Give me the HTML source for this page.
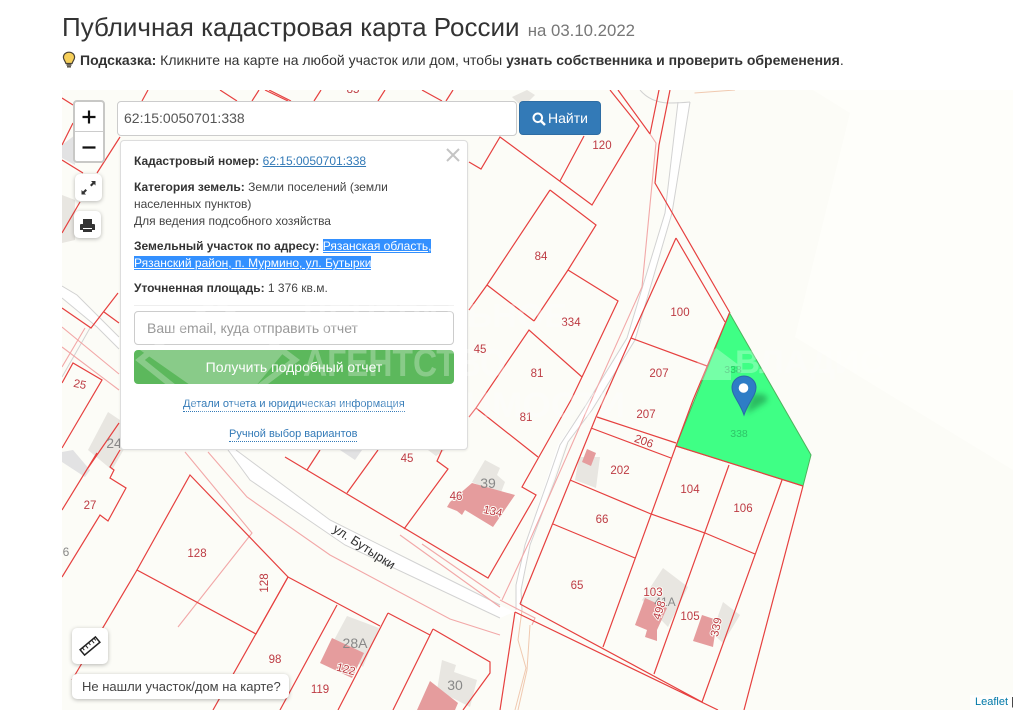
<!DOCTYPE html>
<html lang="ru"><head><meta charset="utf-8"><title>Публичная кадастровая карта России</title>
<style>
html,body{margin:0;padding:0;background:#fff}
body{width:1013px;height:720px;position:relative;overflow:hidden;font-family:"Liberation Sans",Arial,sans-serif;color:#333}
.a{position:absolute;white-space:nowrap}
h1{position:absolute;margin:0;left:62px;top:12px;font-size:26px;line-height:30px;font-weight:400;color:#333;white-space:nowrap}
h1 small{font-size:16.8px;color:#777;margin-left:1px}
.hint{left:80px;top:51px;font-size:14px;line-height:18px}
#map{position:absolute;left:62px;top:90px;width:951px;height:620px;overflow:hidden;background:#fcfcf7}
svg{position:absolute;left:0;top:0}
.r{fill:none;stroke:#e6403f;stroke-width:1.2}
.l{fill:none;stroke:#f2a8a8;stroke-width:1.1}
.g{fill:none;stroke:#d2d2d2;stroke-width:1}
.t text{font-family:"Liberation Sans",sans-serif;font-size:11.5px;fill:#bd3b43;text-anchor:middle;paint-order:stroke;stroke:#fcfcf7;stroke-width:2px}
.t text.d{fill:#888;font-size:14px;stroke:none}
.input{left:117px;top:101px;width:400px;height:35px;box-sizing:border-box;background:#fff;border:1px solid #ccc;border-radius:4px;font-size:14px;line-height:33px;color:#555;padding-left:6px}
.btn{left:519px;top:101px;width:82px;height:34px;box-sizing:border-box;background:#337ab7;border:1px solid #2e6da4;border-radius:4px;color:#fff;font-size:14px;line-height:32px}
.pop{left:120px;top:140px;width:348px;height:310px;box-sizing:border-box;background:#fff;border:1px solid #ddd;border-radius:4px;box-shadow:0 1px 2px rgba(0,0,0,.08)}
.p{position:absolute;left:134px;font-size:12px;line-height:17px;color:#444;white-space:nowrap}
.p b{color:#333}
.p a{color:#337ab7;text-decoration:underline}
.sel{background:#3390ff;color:#fff;text-decoration:underline}
.ctl{position:absolute;background:#fff;border-radius:5px;box-shadow:0 1px 4px rgba(0,0,0,.28)}
</style></head><body>
<h1>Публичная кадастровая карта России <small>на 03.10.2022</small></h1>
<svg style="left:62px;top:51px" width="14" height="18" viewBox="0 0 14 18"><path d="M7 1.2C3.6 1.2 1.4 3.6 1.4 6.3c0 2.5 1.9 3.6 2.5 6.2h6.2c.6-2.6 2.5-3.7 2.5-6.2C12.600 3.600 10.400 1.200 7 1.200z" fill="#f6cf5a" stroke="#4a4336" stroke-width="1.2"/><path d="M4.500 14h5M5 15.800h4" stroke="#4a4336" stroke-width="1.400"/></svg>
<div class="a hint"><b>Подсказка:</b> Кликните на карте на любой участок или дом, чтобы <b>узнать собственника и проверить обременения</b>.</div>

<div id="map">
<svg width="951" height="620" viewBox="62 90 951 620">
<defs><filter id="bl" x="-50%" y="-50%" width="200%" height="200%"><feGaussianBlur stdDeviation="3"/></filter></defs>
<polygon points="813,90 1013,90 1013,470 795,337 850,113" fill="#fefefa"/>
<!-- road fills -->
<polygon points="236,450 330,520 410,560 500,605 514,612 500,618 345,545 250,480 228,450" fill="#fff"/>
<polyline points="236,450 330,520 410,560 500,605" class="g"/>
<polyline points="228,450 250,480 345,545 500,618" class="g"/>
<polygon points="62,286 77,295 119,337 119,349 97,327 62,298" fill="#fff"/>
<polyline points="62,286 77,295 119,337" class="g"/><polyline points="62,298 97,327 119,349" class="g"/>
<polyline points="90,328 62,377" class="g"/>
<polygon points="678,102 690,102 672,213 635,340 592,410 565,445 530,545 521,590 521,625 515,612 516,585 525,545 558,445 586,405 627,338 665,213" fill="#fff"/>
<polyline points="690,102 672,213 635,340 592,410 568,442 555,480 530,545 521,590 522,610" class="g"/>
<polyline points="678,102 665,213 627,338 586,405 560,445 548,480 525,545 516,585 516,610" class="g"/>
<path d="M640 90q10 12 28 13q12 0 22-1" class="g"/>
<path d="M694.500 93L735 90" fill="none" stroke="#f0c9b0" stroke-width="1"/>
<path d="M522 610L518 640L526 668L515 710M530 625L527 670L518 710" fill="none" stroke="#f0c9b0" stroke-width="1"/>
<!-- buildings -->
<g fill="#e8e6e1">
<polygon points="108,412 135,430 112,470 88,450"/>
<polygon points="485,460 500,468 497,475 505,482 500,495 472,482"/>
<polygon points="347,616 379,628 363,667 333,642"/>
<polygon points="442,660 456,665 454,672 477,680 470,707 437,690"/>
<polygon points="579,457 600,457 596,488 575,480"/>
<polygon points="663,568 688,587 668,627 642,600"/>
<polygon points="723,602 740,615 723,643 712,633"/>
<polygon points="512,97 527,90 535,95 527,103 518,103"/>
<polygon points="62,195 75,200 75,240 62,243"/>
<polygon points="428,450 445,450 436,456"/>
</g>
<g fill="#e2e2e3">
<polygon points="62,145 75,135 75,165 62,158"/>
<polygon points="62,452 73,450 90,470 85,477 62,462"/>
<polygon points="340,450 362,450 355,460"/>
</g>
<g fill="#e59c9d">
<polygon points="472,483 515,495 493,527 465,510 462,515 457,511 447,507 450,502"/>
<polygon points="332,638 364,653 352,678 320,663"/>
<polygon points="430,681 458,703 455,710 417,710"/>
<polygon points="587,449 596,453 591,466 582,462"/>
<polygon points="645,598 667,608 657,630 657,641 645,637 647,630 635,625"/>
<polygon points="702,615 717,620 713,647 693,641"/>
</g>
<!-- light lines -->
<g class="l">
<polyline class="l" points="650,134 656,143 642,287 587,410 530,540 502,600"/>
<polyline class="l" points="185,452 252,533 178,627"/>
<polyline class="l" points="208,452 247,497 330,555 450,619 500,635"/>
<polyline class="l" points="400,535 500,607"/>
<polyline class="l" points="422,544 500,598"/>
<polyline class="l" points="62,327 119,374"/><polyline class="l" points="62,347 119,390"/><polyline class="l" points="85,328 62,367"/>
<polyline class="l" points="500,600 535,618 532,625"/>
</g>
<!-- parcels -->
<g>
<path class="r" d="M148 90L142 101M220 90L237 101M259 90L252 101M265 90L288 101M269 90L291 101M321 90L314 101M385 90L378 101M422 90L442 101M453 90L446 101"/>
<path class="r" d="M62 98L73 105M73 123L62 145M120 137L97 173M80 202L62 233M62 160L83 173"/>
<path class="r" d="M62 308L91 328L118 293M104 312L119 323M62 383L73 363L102 380L62 448M119 423L88 468M120 450L110 467L114 470L110 478L126 488L108 521L100 515L62 577M62 510L97 453"/>
<polygon class="r" points="190,475 288,577 256,634 137,570"/>
<path class="r" d="M137 570L72 680M288 577L213 710M288 577L380 626M337 605L280 710M388 613L338 710M388 613L430 635M433 629L490 662L490 673L463 710M433 629L393 710"/>
<path class="r" d="M285 457L488 578L536 495L522 487L571 400M307 470L320 450M347 493L378 450M404 529L448 469L437 461L442 450"/>
<path class="r" d="M610 90L639 126L592 205L500 137L481 169L469 162M560 181L584 136"/>
<path class="r" d="M618 90L650 134M659 90L650 134M670 90L659 145L655 183L730 313"/>
<path class="r" d="M550 190L596 225L568 270L534 321M550 190L487 285L469 310M487 285L534 321"/>
<path class="r" d="M568 270L618 301L582 377L529 330L476 408L469 417M476 408L538 457M582 377L571 400"/>
<path class="r" d="M676 238L725 322M676 238L631 338L707 366M631 338L596 417L520 604"/>
<path class="r" d="M597 417L676 443M591 428L671 458M676 446L603 647M729 465L654 674M782 480L702 702M803 486L744 710"/>
<path class="r" d="M570 480L651 514L705 533L755 554M553 524L635 558"/>
<path class="r" d="M520 604L702 702M515 612L718 710M515 612L500 710"/>
<polygon points="729.500,313 811,455 803,486 676,446" fill="#3fff85" stroke="#4db35c" stroke-width="1"/>
<path class="r" d="M729.500 313L693 400L676 446L803 486"/>
</g>
<!-- labels -->
<g class="t">
<text x="602" y="149">120</text><text x="541" y="260">84</text><text x="571" y="326">334</text>
<text x="680" y="316">100</text><text x="659" y="377">207</text><text x="646" y="418">207</text>
<text x="644" y="445" transform="rotate(20 644 441)">206</text>
<text x="480" y="353">45</text><text x="537" y="377">81</text><text x="526" y="421">81</text>
<text x="620" y="474">202</text><text x="690" y="493">104</text><text x="743" y="512">106</text>
<text x="602" y="523">66</text><text x="577" y="589">65</text><text x="653" y="596">103</text>
<text x="690" y="620">105</text>
<text class="d" x="665" y="606" style="font-size:12px">41A</text>
<text x="659" y="614" transform="rotate(-72 659 610)">498</text>
<text x="716" y="631" transform="rotate(-78 716 627)">339</text>
<text x="456" y="500">46</text><text class="d" x="488" y="488">39</text>
<text x="493" y="515" transform="rotate(12 493 511)">134</text>
<text x="407" y="462">45</text><text x="197" y="557">128</text>
<text x="264" y="587" transform="rotate(-90 264 583)">128</text>
<text x="275" y="663">98</text><text x="320" y="693">119</text>
<text class="d" x="355" y="648">28A</text><text x="346" y="673" transform="rotate(15 346 669)">122</text>
<text class="d" x="455" y="690">30</text><text x="90" y="509">27</text>
<text class="d" x="66" y="556" style="font-size:12px">6</text>
<text x="80" y="388" transform="rotate(12 80 384)">25</text><text class="d" x="114" y="448">24</text>
<text x="353" y="93">85</text>
<text x="739" y="437" style="fill:#2fc468;stroke:none;font-size:10.500px">338</text>
<text x="733" y="373" style="fill:#2fc468;stroke:none;font-size:10.500px">338</text>
<text x="364" y="551" transform="rotate(33 364 547)" style="fill:#333;font-size:13px;stroke:none">ул. Бутырки</text>
</g>
<!-- marker -->
<path d="M746 414L766 402Q770 396 762 394L752 394Z" fill="#1f8f4a" opacity=".6" filter="url(#bl)"/>
<path d="M744 376c-6.600 0-12 5.200-12 11.600c0 8 8 15 12 27.400c4-12.400 12-19.400 12-27.400c0-6.400-5.400-11.600-12-11.600z" fill="#2e7dc6" stroke="#2a6aa8" stroke-width="1"/>
<circle cx="743.500" cy="388" r="4.800" fill="#fff"/>
</svg>
</div>

<div class="a input">62:15:0050701:338</div>
<div class="a btn"><svg style="position:absolute;left:12px;top:10px" width="14" height="14" viewBox="0 0 14 14"><circle cx="5.800" cy="5.800" r="4.300" fill="none" stroke="#fff" stroke-width="2"/><path d="M9 9l4 4" stroke="#fff" stroke-width="2.400"/></svg><span style="position:absolute;left:28px">Найти</span></div>

<div style="position:absolute;left:73px;top:100px;width:32px;height:63px;box-sizing:border-box;border:2px solid #c8c8c6;border-radius:4px;background:#fff">
<div style="position:absolute;left:0;top:29px;width:28px;height:1px;background:#ccc"></div>
<svg width="28" height="59" style="left:0;top:0"><path d="M14 8.500v13M7.500 15h13M7.500 45.500h13" stroke="#111" stroke-width="2.200"/></svg>
</div>
<div class="ctl" style="left:75px;top:174px;width:27px;height:27px"><svg width="27" height="27"><path d="M16 7h4.500v4.500L19 10l-2.500 2.500-1.500-1.500L17.500 8.500zM11 20.500H6.500V16L8 17.500l2.500-2.500 1.500 1.500L9.500 19z" fill="#333"/></svg></div>
<div class="ctl" style="left:74px;top:211px;width:27px;height:27px"><svg width="27" height="27"><path d="M9 8h9v5H9zM7 13h13a1 1 0 0 1 1 1v5h-3v-2H9v2H6v-5a1 1 0 0 1 1-1zM9 18h9v3H9z" fill="#333"/></svg></div>

<div class="a pop"></div>
<svg style="left:446px;top:148px" width="14" height="14"><path d="M1 1l12 12M13 1L1 13" stroke="#c4c4c4" stroke-width="2"/></svg>
<div class="p" style="top:153px"><b>Кадастровый номер:</b> <a>62:15:0050701:338</a></div>
<div class="p" style="top:179px"><b>Категория земель:</b> Земли поселений (земли<br>населенных пунктов)<br>Для ведения подсобного хозяйства</div>
<div class="p" style="top:238px"><b>Земельный участок по адресу:</b> <span class="sel">Рязанская область,</span><br><span class="sel">Рязанский район, п. Мурмино, ул. Бутырки</span></div>
<div class="p" style="top:280px"><b>Уточненная площадь:</b> 1 376 кв.м.</div>
<div class="a" style="left:134px;top:305px;width:320px;height:1px;background:#eee"></div>
<div class="a" style="left:134px;top:311px;width:320px;height:34px;box-sizing:border-box;border:1px solid #ccc;border-radius:4px;font-size:14px;line-height:32px;color:#999;padding-left:12px;background:#fff">Ваш email, куда отправить отчет</div>
<div class="a" style="left:134px;top:350px;width:320px;height:34px;background:#5cb85c;border-radius:4px;font-size:14px;line-height:34px;color:#fff;text-align:center">Получить подробный отчет</div>
<div class="a" style="left:183px;top:397px;font-size:11px;line-height:14px;color:#337ab7;border-bottom:1px dotted #337ab7">Детали отчета и юридическая информация</div>
<div class="a" style="left:229px;top:427px;font-size:11px;line-height:14px;color:#337ab7;border-bottom:1px dotted #337ab7">Ручной выбор вариантов</div>

<!-- watermarks -->
<svg style="left:0;top:0;pointer-events:none" width="1013" height="720">
<g fill="#fff" opacity=".28" font-family="Liberation Sans, sans-serif" font-weight="700">
<text x="303" y="327" font-size="33" textLength="264" lengthAdjust="spacingAndGlyphs">ЦЕНТРАЛЬНОЕ</text>
<text x="303" y="376" font-size="39" textLength="203" lengthAdjust="spacingAndGlyphs">АГЕНТСТВО</text>
<text x="303" y="417" font-size="35" textLength="322" lengthAdjust="spacingAndGlyphs">НЕДВИЖИМОСТИ</text>
<text x="735" y="373" font-size="32" textLength="150" lengthAdjust="spacingAndGlyphs">ВЛАДИС</text>
<text x="86" y="692" font-size="22" textLength="120" lengthAdjust="spacingAndGlyphs">Домклик</text>
<polygon points="140,360 215,300 295,360 215,420" fill="none" stroke="#fff" stroke-width="6"/>
<polygon points="140,350 230,350 290,345 240,405 190,385"/>
<polygon points="690,368 716,348 740,366 731,366 731,380 700,380 700,368"/>
</g>
</svg>

<div class="ctl" style="left:72px;top:628px;width:36px;height:36px"><svg width="36" height="36"><g transform="rotate(-40 18 18)"><rect x="8" y="14.500" width="20" height="7" fill="#fff" stroke="#222" stroke-width="1.500"/><path d="M11 14.500v3M15 14.500v4M19 14.500v3M23 14.500v4M26 14.500v3" stroke="#222" stroke-width="1"/></g></svg></div>
<div class="ctl a" style="left:72px;top:674px;width:217px;height:25px;font-size:13px;line-height:25px;color:#444;text-indent:10px">Не нашли участок/дом на карте?</div>
<div class="a" style="left:970px;top:695px;width:43px;height:15px;background:rgba(255,255,255,.7);font-size:11px;line-height:15px;color:#333;padding-left:5px;box-sizing:border-box"><span style="color:#0078a8">Leaflet</span> |</div>
</body></html>
